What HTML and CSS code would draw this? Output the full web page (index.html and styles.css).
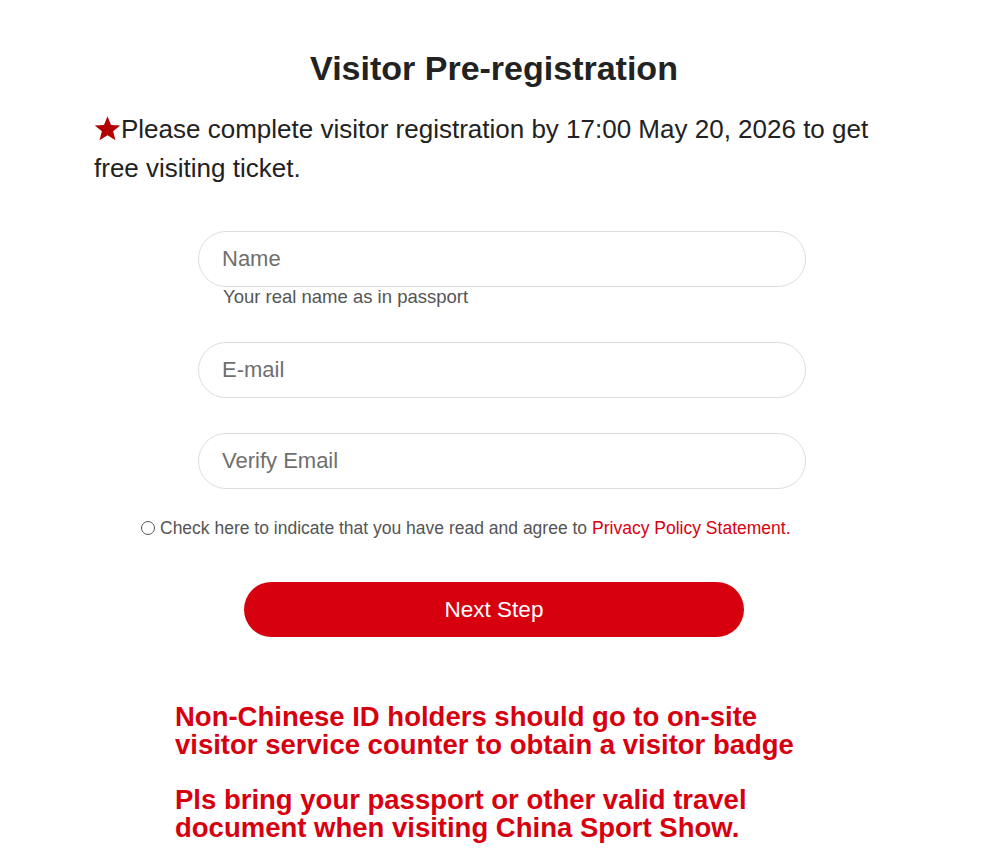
FILE: index.html
```html
<!DOCTYPE html>
<html lang="en">
<head>
<meta charset="utf-8">
<title>Visitor Pre-registration</title>
<link rel="stylesheet" href="styles.css">
</head>
<body>
<main class="page">
  <h1 class="title">Visitor Pre-registration</h1>
  <p class="intro"><svg class="star" viewBox="0 0 24 24" aria-hidden="true"><path d="M12 1.2l3.1 7.6 8.2.5-6.3 5.2 2.1 8-7.1-4.4-7.1 4.4 2.1-8L.7 9.3l8.2-.5z"/></svg>Please complete visitor registration by 17:00 May 20, 2026 to get free visiting ticket.</p>
  <form class="form">
    <div class="field">
      <input class="input" type="text" placeholder="Name">
      <div class="hint">Your real name as in passport</div>
    </div>
    <div class="field">
      <input class="input" type="text" placeholder="E-mail">
    </div>
    <div class="field">
      <input class="input" type="text" placeholder="Verify Email">
    </div>
    <label class="agree"><span class="radio"></span>Check here to indicate that you have read and agree to <a class="link" href="#">Privacy Policy Statement.</a></label>
    <button class="btn" type="button">Next Step</button>
  </form>
  <div class="notes">
    <p class="note">Non-Chinese ID holders should go to on-site visitor service counter to obtain a visitor badge</p>
    <p class="note">Pls bring your passport or other valid travel document when visiting China Sport Show.</p>
  </div>
</main>
</body>
</html>
```
FILE: styles.css
```css
html, body {
  margin: 0;
  padding: 0;
  background: #fff;
}
body {
  font-family: "Liberation Sans", Arial, sans-serif;
  color: #222;
}
.page {
  width: 800px;
  margin: 0 auto;
  padding-top: 46px;
}
.title {
  margin: 0;
  text-align: center;
  font-size: 34px;
  font-weight: bold;
  line-height: 44px;
  color: #222;
}
.intro {
  margin: 20px 0 0 0;
  font-size: 26px;
  line-height: 39px;
  color: #222;
}
.star {
  width: 27px;
  height: 27px;
  fill: #b00000;
  vertical-align: -4px;
}
.form {
  margin-top: 43px;
  display: flex;
  flex-direction: column;
}
.field {
  margin-left: 104px;
  width: 608px;
  margin-bottom: 35px;
}
.input {
  display: block;
  box-sizing: border-box;
  width: 608px;
  height: 56px;
  border: 1px solid #ddd;
  border-radius: 28px;
  padding: 0 23px;
  font-family: "Liberation Sans", Arial, sans-serif;
  font-size: 22px;
  color: #333;
  outline: none;
  background: #fff;
}
.input::placeholder {
  color: #6f6f6f;
}
.hint {
  margin: 0 0 0 25px;
  font-size: 18.5px;
  line-height: 20px;
  color: #555;
}
.agree {
  margin-left: 47px;
  margin-top: -8px;
  display: flex;
  align-items: center;
  font-size: 17.5px;
  line-height: 24px;
  color: #555;
}
.radio {
  width: 12px;
  height: 12px;
  border: 1px solid #555;
  border-radius: 50%;
  margin-right: 5px;
}
.link {
  color: #d7000f;
  text-decoration: none;
  margin-left: 5px;
}
.btn {
  margin: 42px auto 0;
  width: 500px;
  height: 55px;
  border: none;
  border-radius: 28px;
  background: #d7000f;
  color: #fff;
  font-family: "Liberation Sans", Arial, sans-serif;
  font-size: 22.5px;
}
.notes {
  width: 660px;
  margin: 66px 0 0 81px;
}
.note {
  margin: 0 0 27px 0;
  font-size: 27.5px;
  font-weight: bold;
  line-height: 28px;
  color: #d7000f;
}
```
